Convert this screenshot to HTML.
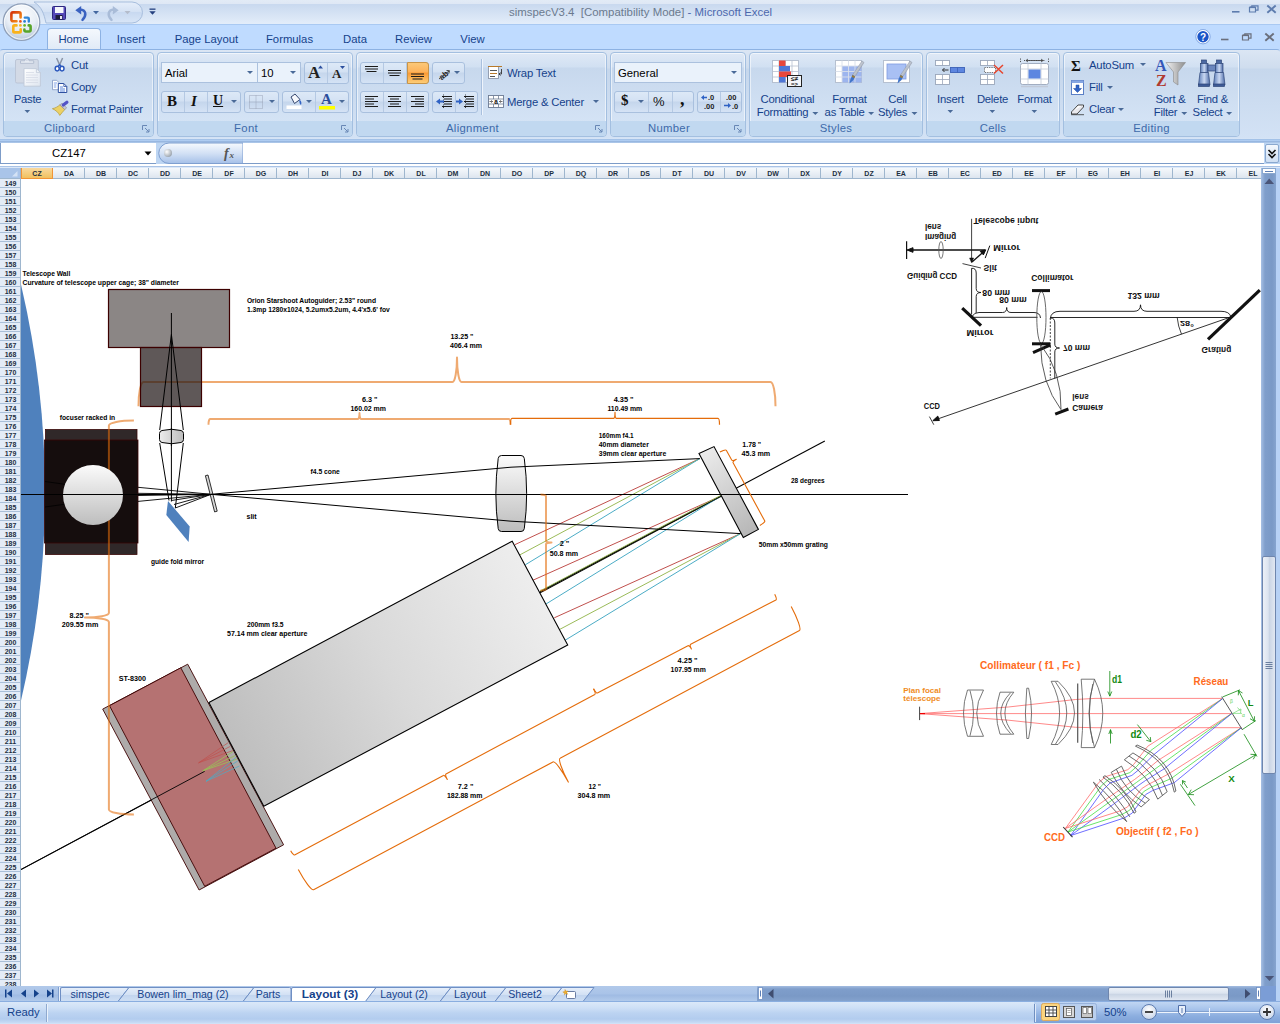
<!DOCTYPE html>
<html lang="en">
<head>
<meta charset="utf-8">
<title>simspecV3.4 [Compatibility Mode] - Microsoft Excel</title>
<style>
*{box-sizing:border-box;margin:0;padding:0}
html,body{width:1280px;height:1024px;overflow:hidden;background:#fff}
body{font-family:"Liberation Sans",sans-serif;font-size:12px;color:#15428b;position:relative}
.abs{position:absolute}
#titlebar{left:0;top:0;width:1280px;height:27px;background:linear-gradient(#e2ebf6 0,#dfe8f5 3.5px,#c9d9ef 4.5px,#d3e1f3 12px,#e3edfa 24px)}
#tabrow{left:0;top:27px;width:1280px;height:23px;background:#bfdbff}
#ribbon{left:0;top:49px;width:1280px;height:92px;background:linear-gradient(#dbe6f4 0,#cfddee 18px,#c6d7ec 19px,#d3e2f5 88px,#e4effb 92px);border-top:1px solid #8db2e3;border-radius:3px 3px 0 0}
#ribbonbot{left:0;top:139px;width:1280px;height:3px;background:linear-gradient(#9ebde3,#bfdbff)}
.t{position:absolute;white-space:nowrap;line-height:1}
.tab{position:absolute;top:32px;font-size:11.3px;color:#15428b;white-space:nowrap;line-height:14px;transform:translateX(-50%)}
.grp{position:absolute;top:52px;height:85px;border:1px solid #a3bfe0;border-radius:4px;background:linear-gradient(#dfe9f6 0,#d1e0f2 14px,#c7d8ed 15px,#d4e3f5 69px,#c1d8f0 70px,#c2d9f1 85px);box-shadow:0 0 0 1px rgba(255,255,255,.55) inset}
.grp .lab{position:absolute;left:0;right:0;bottom:0;height:15px;background:#c1d8f0;border-radius:0 0 3px 3px;text-align:center;font-size:11.3px;letter-spacing:.3px;line-height:14px;padding-right:18px;color:#3e6aaa}
.grp .dl{position:absolute;right:3px;bottom:3px;width:8px;height:8px}
.rt{position:absolute;font-size:11.3px;letter-spacing:-.2px;color:#15428b;white-space:nowrap;line-height:14px}
.rc{position:absolute;font-size:11.3px;letter-spacing:-.25px;color:#15428b;white-space:nowrap;line-height:13px;text-align:center;transform:translateX(-50%)}
.btng{position:absolute;height:22px;border:1px solid #a9c0de;border-radius:3px;background:linear-gradient(#dde9f7 0,#d3e1f3 9px,#c5d6ec 10px,#d6e4f6 21px)}
.sep{position:absolute;top:0;bottom:0;width:1px;background:#b5c9e3}
.combo{position:absolute;height:21px;border:1px solid #abc1de;background:#eaf2fb;font-size:11.3px;color:#000;line-height:21px;padding-left:3px}
.dd{position:absolute;width:0;height:0;border-left:3px solid transparent;border-right:3px solid transparent;border-top:3px solid #4a6a98}
svg{position:absolute;overflow:visible}
.grp .lab.nc{padding-right:0}
.st{position:absolute;top:988px;font-size:10.600px;color:#15428b;white-space:nowrap;line-height:13px;transform:translateX(-50%)}
.ch{position:absolute;top:169.500px;width:32px;text-align:center;font-size:7px;font-weight:bold;color:#1d2f3f;line-height:8px;white-space:nowrap}
.rh{position:absolute;left:0;width:20px;padding-left:1px;height:9px;border-bottom:1px solid #a9bfd8;text-align:center;font-size:7px;font-weight:bold;color:#1d2f3f;line-height:9.600px}
.ddi{display:inline-block;width:0;height:0;border-left:3px solid transparent;border-right:3px solid transparent;border-top:3px solid #4a6a98;vertical-align:middle;margin-left:1px}
</style>
</head>
<body>
<div id="titlebar" class="abs"></div>
<div id="tabrow" class="abs" style="top:24px;height:26px;border-top:1px solid #a9c9f2"></div>
<!-- quick access toolbar pill -->
<svg class="abs" style="left:0;top:0" width="300" height="52" viewBox="0 0 300 52">
 <defs>
  <linearGradient id="qat" x1="0" y1="0" x2="0" y2="1"><stop offset="0" stop-color="#e6eefa"/><stop offset=".45" stop-color="#d5e2f4"/><stop offset=".5" stop-color="#c8d9f0"/><stop offset="1" stop-color="#d9e6f7"/></linearGradient>
  <linearGradient id="lgr" x1="0" y1="0" x2="1" y2="1"><stop offset="0" stop-color="#d4330a"/><stop offset="1" stop-color="#f8981d"/></linearGradient>
  <radialGradient id="orb" cx=".5" cy=".3" r=".75"><stop offset="0" stop-color="#ffffff"/><stop offset=".55" stop-color="#e8eef6"/><stop offset="1" stop-color="#aebfd6"/></radialGradient>
 </defs>
 <path d="M34 2 H132 a10.5 10.5 0 0 1 0 21 H46 C44 14 42 7 34 2 Z" fill="url(#qat)" stroke="#a7bedd" stroke-width="1"/>
 <circle cx="21.5" cy="22.2" r="18.3" fill="url(#orb)" stroke="#8f9fb8" stroke-width="1.2"/>
 <circle cx="21.5" cy="22.2" r="17" fill="none" stroke="#ffffff" stroke-opacity=".8" stroke-width="1"/>
 <!-- office logo -->
 <g fill="none" stroke-width="2.600" stroke-linejoin="round" stroke-linecap="round">
  <path d="M16.500 21.300H13a1.600 1.600 0 0 1-1.600-1.600V14a1.600 1.600 0 0 1 1.600-1.600h6a1.600 1.600 0 0 1 1.600 1.600v3.500" stroke="url(#lgr)"/>
  <path d="M24.800 17.600h2.800a1.200 1.200 0 0 1 1.200 1.200v2.700" stroke="#2f86d8" stroke-width="2.400"/>
  <path d="M16.500 25.400h-2a1.200 1.200 0 0 0-1.200 1.200v4.600a1.200 1.200 0 0 0 1.200 1.200h5a1.200 1.200 0 0 0 1.200-1.200v-2" stroke="#f9b21c"/>
  <path d="M24.400 29.500v.800a1.200 1.200 0 0 0 1.200 1.200h3.800a1.200 1.200 0 0 0 1.200-1.200v-3.700a1.200 1.200 0 0 0-1.200-1.200h-.700" stroke="#58a52a"/>
 </g>
 <circle cx="20.400" cy="21.400" r="1.400" fill="#e8541c"/><circle cx="24.600" cy="21.400" r="1.400" fill="#2f7fd6"/>
 <circle cx="20.400" cy="25.400" r="1.400" fill="#f7b52a"/><circle cx="24.600" cy="25.400" r="1.400" fill="#6ab82c"/>
 <!-- save icon -->
 <g>
  <rect x="52.5" y="6.5" width="13" height="13" rx="1" fill="#5448b8" stroke="#2d2780" stroke-width="1"/>
  <rect x="55" y="7" width="8.5" height="6" fill="#f4f6fb"/>
  <rect x="55.5" y="15" width="7" height="4.5" fill="#1c1c3a"/>
  <rect x="60" y="16" width="2" height="3" fill="#e8e8f0"/>
 </g>
 <!-- undo -->
 <path d="M82.500 19.800c4.500-4.500 3.500-10-2.500-10.300" stroke="#3a62c0" stroke-width="2.500" fill="none" stroke-linecap="round"/>
 <path d="M75.300 10.200l5.900-4.200v8.400z" fill="#3a62c0"/>
 <path d="M93 11 h6 l-3 3.200z" fill="#43679f"/>
 <!-- redo (disabled) -->
 <path d="M111.500 19.800c-4.500-4.500-3.500-10 2.500-10.300" stroke="#a9bcd8" stroke-width="2.500" fill="none" stroke-linecap="round"/>
 <path d="M118.700 10.200l-5.900-4.200v8.400z" fill="#a9bcd8"/>
 <path d="M124.500 11 h6 l-3 3.200z" fill="#b4bccb"/>
 <!-- customize -->
 <rect x="149.500" y="8.500" width="6" height="1.300" fill="#24407f"/>
 <path d="M149.300 11.300 h6.400 l-3.200 3.500z" fill="#24407f"/>
</svg>
<div class="t" style="left:509px;top:7px;font-size:11.400px;color:#6b7a8e;letter-spacing:.02px">simspecV3.4&nbsp; [Compatibility Mode] <span style="color:#4d68ad">- Microsoft Excel</span></div>
<!-- window controls -->
<svg class="abs" style="left:1180px;top:0" width="100" height="52" viewBox="1180 0 100 52">
 <g fill="none" stroke="#5d7cae" stroke-width="1.600">
  <path d="M1232 11.800h7.500"/>
  <path d="M1249.500 7.500h6v4.500h-6z M1251.800 7.500v-1.700h6.200v4.300h-2.300" stroke-width="1.200"/><path d="M1249.500 7.200h6" stroke-width="1.800"/>
  <path d="M1267.300 5.500l8.400 7.300M1275.700 5.500l-8.400 7.300" stroke-width="1.900"/>
 </g>
 <circle cx="1203" cy="36.700" r="6.300" fill="#1a55c8" stroke="#ffffff" stroke-width="1.200"/>
 <circle cx="1203" cy="36.700" r="7.200" fill="none" stroke="#6c94d8" stroke-width=".7"/>
 <text x="1203" y="40.500" font-family="Liberation Sans,sans-serif" font-weight="bold" font-size="10" fill="#fff" text-anchor="middle">?</text>
 <g fill="none" stroke="#6a6f7c" stroke-width="1.600">
  <path d="M1221 39.500h7.500"/>
  <path d="M1242.500 35.500h6v4.500h-6z M1244.800 35.500v-1.700h6.200v4.300h-2.300" stroke-width="1.200"/><path d="M1242.500 35.200h6" stroke-width="1.800"/>
  <path d="M1265.300 33.500l8.400 7.300M1273.700 33.500l-8.400 7.300" stroke-width="1.900"/>
 </g>
</svg>
<!-- tabs -->
<div class="abs" style="left:47px;top:28px;width:54px;height:23px;border:1px solid #8db2e3;border-bottom:none;border-radius:4px 4px 0 0;background:linear-gradient(#f4f8fd,#dfe9f6)"></div>
<div class="tab" style="left:73.500px">Home</div>
<div class="tab" style="left:131px">Insert</div>
<div class="tab" style="left:206.500px">Page Layout</div>
<div class="tab" style="left:289.500px">Formulas</div>
<div class="tab" style="left:355px">Data</div>
<div class="tab" style="left:413.500px">Review</div>
<div class="tab" style="left:472.500px">View</div>
<div id="ribbon" class="abs"></div>
<div id="ribbonbot" class="abs"></div>
<!-- ===== Clipboard ===== -->
<div class="grp" style="left:3px;width:151px"><div class="lab">Clipboard</div>
<svg class="dl" viewBox="0 0 8 8"><path d="M.5 5V.5H5" fill="none" stroke="#6887b5"/><path d="M3 3l4 4M7 4v3H4" fill="none" stroke="#6887b5"/></svg></div>
<svg class="abs" style="left:0;top:50px" width="160" height="90" viewBox="0 50 160 90">
 <defs><linearGradient id="pg" x1="0" y1="0" x2="1" y2="1"><stop offset="0" stop-color="#ffffff"/><stop offset="1" stop-color="#dfe6f0"/></linearGradient></defs>
 <!-- paste icon -->
 <rect x="15.500" y="59.500" width="22.800" height="23.500" rx="1.500" fill="#d3dae6" stroke="#bcc6d7"/>
 <path d="M20.500 63.300v-2.500h4.200a2.200 2.200 0 0 1 4.400 0H33.700v2.500z" fill="#e6ebf3" stroke="#a9b5c9" stroke-width=".8"/>
 <circle cx="26.900" cy="60.300" r=".8" fill="#c9d1df"/>
 <path d="M24 68.600h12.400l4 4v13.600H24z" fill="url(#pg)" stroke="#c0c9d9" stroke-width=".9"/>
 <path d="M36.400 68.600v4h4" fill="none" stroke="#c0c9d9" stroke-width=".8"/>
 <path d="M26 72.500h8M26 75h12M26 77.500h12M26 80h12M26 82.500h12" stroke="#d5dbe6" stroke-width=".8"/>
 <path d="M24.500 110h5.600l-2.800 3z" fill="#4a6a98"/>
 <!-- cut -->
 <path d="M56.600 58l3.300 7.500M62.600 58l-3.300 7.500" stroke="#8a94a6" stroke-width="1.500" fill="none"/>
 <path d="M59.600 64.500l-1.500 2M59.600 64.500l1.500 2" stroke="#2f5fc4" stroke-width="1.300"/>
 <ellipse cx="57.200" cy="68.600" rx="2" ry="2.300" fill="#fff" stroke="#2c58bd" stroke-width="1.500"/><ellipse cx="62" cy="68.600" rx="2" ry="2.300" fill="#fff" stroke="#2c58bd" stroke-width="1.500"/>
 <!-- copy -->
 <path d="M52.500 80.300h4.200l2 2v7.400h-6.200z" fill="#fff" stroke="#7f96c4" stroke-width=".8"/>
 <path d="M53.800 83h3.500M53.800 85h2.500M53.800 87h2.500" stroke="#5f8ae0" stroke-width=".8"/>
 <path d="M58.300 83.500h5.500l3 3v6h-8.500z" fill="#fff" stroke="#2c4fa0" stroke-width="1"/>
 <path d="M63.800 83.500v3h3" fill="none" stroke="#2c4fa0" stroke-width=".8"/>
 <path d="M60 87h3M60 89h5M60 91h5" stroke="#4a7bd8" stroke-width=".9"/>
 <!-- format painter -->
 <path d="M52.400 108.700c2.500-.500 5.500-2 7.400-3.800l5 4.600c-1.800 2-3.600 4.200-5 5.900c-1.500-3-4-5.200-7.400-6.700z" fill="#ecd166" stroke="#b39a36" stroke-width=".7"/>
 <path d="M59.800 104.900l2.200-1.600 4.600 4.500-1.800 1.700z" fill="#c9c9d2" stroke="#7f7f90" stroke-width=".6"/>
 <path d="M63.300 105l3.600-2.800" stroke="#5353c6" stroke-width="3.200" stroke-linecap="round"/>
</svg>
<div class="rc" style="left:27.500px;top:93px">Paste</div>
<div class="rt" style="left:71px;top:58px">Cut</div>
<div class="rt" style="left:71px;top:80px">Copy</div>
<div class="rt" style="left:71px;top:102px">Format Painter</div>
<!-- ===== Font ===== -->
<div class="grp" style="left:157px;width:196px"><div class="lab">Font</div>
<svg class="dl" viewBox="0 0 8 8"><path d="M.5 5V.5H5" fill="none" stroke="#6887b5"/><path d="M3 3l4 4M7 4v3H4" fill="none" stroke="#6887b5"/></svg></div>
<div class="combo" style="left:161px;top:62px;width:97px">Arial</div><div class="dd" style="left:247px;top:71px"></div>
<div class="combo" style="left:257px;top:62px;width:44px">10</div><div class="dd" style="left:290px;top:71px"></div>
<div class="btng" style="left:304px;top:62px;width:45px"><div class="sep" style="left:22px"></div></div>
<div class="t" style="left:308px;top:64px;font-family:'Liberation Serif',serif;font-weight:bold;font-size:17px;color:#222">A</div>
<div class="t" style="left:332px;top:67px;font-family:'Liberation Serif',serif;font-weight:bold;font-size:13px;color:#222">A</div>
<svg class="abs" style="left:318px;top:64px" width="30" height="8" viewBox="0 0 30 8"><path d="M0 4.500h5l-2.500-3z" fill="#2c4f9e"/><path d="M22 2h5l-2.500 3z" fill="#2c4f9e"/></svg>
<div class="btng" style="left:161px;top:91px;width:80px"><div class="sep" style="left:22px"></div><div class="sep" style="left:45px"></div></div>
<div class="t" style="left:167px;top:94px;font-family:'Liberation Serif',serif;font-weight:bold;font-size:15px;color:#111">B</div>
<div class="t" style="left:191px;top:94px;font-family:'Liberation Serif',serif;font-style:italic;font-weight:bold;font-size:15px;color:#111">I</div>
<div class="t" style="left:213px;top:94px;font-family:'Liberation Serif',serif;font-weight:bold;font-size:14px;color:#111;text-decoration:underline">U</div>
<div class="dd" style="left:231px;top:100px"></div>
<div class="btng" style="left:244px;top:91px;width:35px"></div>
<svg class="abs" style="left:249px;top:95px" width="14" height="14" viewBox="0 0 14 14"><path d="M.5.5h13v13H.5zM7 .5v13M.5 7h13" fill="none" stroke="#9aa5b8" stroke-width="1" stroke-dasharray="1 1"/></svg>
<div class="dd" style="left:269px;top:100px"></div>
<div class="btng" style="left:282px;top:91px;width:67px"><div class="sep" style="left:32px"></div></div>
<svg class="abs" style="left:285px;top:93px" width="62" height="19" viewBox="285 93 62 19">
 <path d="M291 97l4-3 5 5.500-5.500 4z" fill="#f6f8fc" stroke="#34466e" stroke-width="1"/><path d="M299.500 99.500c1.800 1.500 2.300 3.500 1.500 5.500-1-.5-2-2.500-1.500-5.500z" fill="#2f62c4"/>
 <rect x="286.500" y="105.500" width="15" height="3.500" fill="#ffffff"/>
 <rect x="319" y="106" width="16" height="3.500" fill="#ffff00"/>
</svg>
<div class="t" style="left:321px;top:92px;font-family:'Liberation Serif',serif;font-weight:bold;font-size:15px;color:#2a4d9b">A</div>
<div class="dd" style="left:306px;top:100px"></div><div class="dd" style="left:339px;top:100px"></div>
<!-- ===== Alignment ===== -->
<div class="grp" style="left:356px;width:251px"><div class="lab">Alignment</div>
<svg class="dl" viewBox="0 0 8 8"><path d="M.5 5V.5H5" fill="none" stroke="#6887b5"/><path d="M3 3l4 4M7 4v3H4" fill="none" stroke="#6887b5"/></svg></div>
<div class="btng" style="left:360px;top:62px;width:69px"><div class="sep" style="left:22px"></div><div class="sep" style="left:45px"></div>
 <div class="abs" style="left:46px;top:-1px;width:22px;height:22px;background:linear-gradient(#fbc878 0,#fdb25a 9px,#fb9a33 10px,#fdd27e 21px);border:1px solid #c89448;border-radius:0 3px 3px 0"></div></div>
<div class="btng" style="left:432px;top:62px;width:33px"></div>
<div class="btng" style="left:360px;top:91px;width:69px"><div class="sep" style="left:22px"></div><div class="sep" style="left:45px"></div></div>
<div class="btng" style="left:432px;top:91px;width:46px"><div class="sep" style="left:22px"></div></div>
<svg class="abs" style="left:356px;top:58px" width="130" height="60" viewBox="356 58 130 60">
 <g stroke="#1a1a1a" stroke-width="1.100" fill="none">
  <path d="M365 66.500h13M365 69h13M366.500 71.500h10"/>
  <path d="M388 70.500h13M388 73h13M389.500 75.500h10"/>
  <path d="M411 74h13M411 76.500h13M412.500 79h10"/>
  <path d="M365 96.500h13M365 99h9M365 101.500h13M365 104h9M365 106.500h13"/>
  <path d="M388 96.500h13M390 99h9M388 101.500h13M390 104h9M388 106.500h13"/>
  <path d="M411 96.500h13M415 99h9M411 101.500h13M415 104h9M411 106.500h13"/>
  <path d="M442 96.500h10M444 99h8M442 101.500h10M444 104h8M442 106.500h10"/>
  <path d="M464 96.500h10M466 99h8M464 101.500h10M466 104h8M464 106.500h10"/>
  <path d="M443.500 94.500v14M465.500 94.500v14" stroke-dasharray="1 1.500" stroke-width=".8"/>
 </g>
 <path d="M436 101.500l4-3v2h4v2h-4v2z" fill="#2f62c4"/><path d="M459 98.500l4 3-4 3v-2h-3v-2h3z" fill="#2f62c4"/>
 <!-- orientation -->
 <g transform="rotate(-40 446 73)" fill="none" stroke="#222" stroke-width="1"><text x="438" y="76" font-family="Liberation Sans,sans-serif" font-size="8" fill="#222" stroke="none" font-weight="bold">ab</text></g>
 <path d="M439 79l10-8M446.500 70.500l3 .200-.800 3" fill="none" stroke="#444" stroke-width="1"/>
 <path d="M481.500 59v56" stroke="#a9c0de"/><path d="M482.500 59v56" stroke="#eef4fc"/>
</svg>
<div class="dd" style="left:454px;top:71px"></div>
<svg class="abs" style="left:486px;top:62px" width="20" height="50" viewBox="486 62 20 50">
 <rect x="488.500" y="66.500" width="10" height="12" fill="#fff" stroke="#8c97ab" stroke-width=".9"/>
 <path d="M488 66.500h14M490 70.500h7M490 73.500h7M490 76.500h5" stroke="#b97a2a" stroke-width="1.100"/><path d="M490 70.500h7M490 76.500h5" stroke="#555" stroke-width="1"/>
 <path d="M501.500 69v5h-2.500m1.500-1.500l-1.500 1.500 1.500 1.500" fill="none" stroke="#333" stroke-width=".9"/>
 <rect x="488.500" y="95.500" width="15" height="12" fill="#fff" stroke="#6d7b93" stroke-width=".9"/>
 <path d="M488.500 99h15M488.500 104h15M493.500 95.500v3.500M498.500 95.500v3.500M493.500 104v3.500M498.500 104v3.500" stroke="#6d7b93" stroke-width=".8"/>
 <text x="496" y="103.600" font-family="Liberation Sans,sans-serif" font-size="6.500" font-weight="bold" fill="#111" text-anchor="middle">a</text>
 <path d="M489.500 101.500h3m-1.200-1.200l1.200 1.200-1.200 1.200M502.500 101.500h-3m1.200-1.200l-1.200 1.200 1.200 1.200" fill="none" stroke="#333" stroke-width=".7"/>
</svg>
<div class="rt" style="left:507px;top:66px">Wrap Text</div>
<div class="rt" style="left:507px;top:95px">Merge &amp; Center</div>
<div class="dd" style="left:593px;top:100px"></div>
<!-- ===== Number ===== -->
<div class="grp" style="left:610px;width:136px"><div class="lab">Number</div>
<svg class="dl" viewBox="0 0 8 8"><path d="M.5 5V.5H5" fill="none" stroke="#6887b5"/><path d="M3 3l4 4M7 4v3H4" fill="none" stroke="#6887b5"/></svg></div>
<div class="combo" style="left:614px;top:62px;width:128px">General</div><div class="dd" style="left:731px;top:71px"></div>
<div class="btng" style="left:614px;top:91px;width:80px"><div class="sep" style="left:33px"></div><div class="sep" style="left:57px"></div></div>
<div class="t" style="left:621px;top:93px;font-family:'Liberation Serif',serif;font-weight:bold;font-size:15px;color:#111">$</div>
<div class="dd" style="left:638px;top:100px"></div>
<div class="t" style="left:653px;top:95px;font-size:13px;color:#111">%</div>
<div class="t" style="left:680px;top:90px;font-family:'Liberation Serif',serif;font-weight:bold;font-size:18px;color:#111">,</div>
<div class="btng" style="left:697px;top:91px;width:45px"><div class="sep" style="left:22px"></div></div>
<svg class="abs" style="left:697px;top:91px" width="45" height="22" viewBox="697 91 45 22">
 <g font-family="Liberation Sans,sans-serif" font-size="7.500" font-weight="bold" fill="#222">
  <text x="708" y="100">.0</text><text x="704" y="108.500">.00</text>
  <text x="726" y="100">.00</text><text x="732" y="108.500">.0</text></g>
 <path d="M701 97.500l3-2.500v1.700h3v1.600h-3v1.700z" fill="#2f62c4"/>
 <path d="M731 105.500l-3-2.500v1.700h-4v1.600h4v1.700z" fill="#2f62c4"/>
</svg>
<!-- ===== Styles ===== -->
<div class="grp" style="left:749px;width:174px"><div class="lab nc">Styles</div></div>
<svg class="abs" style="left:749px;top:52px" width="174" height="70" viewBox="749 52 174 70">
 <defs><linearGradient id="brush" x1="0" y1="0" x2="1" y2="1"><stop offset="0" stop-color="#e8ecf2"/><stop offset="1" stop-color="#9099a8"/></linearGradient></defs>
 <!-- conditional formatting -->
 <rect x="772.500" y="60.500" width="26" height="22" fill="#fff" stroke="#b6c0d0"/>
 <path d="M772.500 66h26M772.500 71.500h26M772.500 77h26M779 60.500v22M785.500 60.500v22M792 60.500v22" stroke="#b6c0d0" stroke-width=".8"/>
 <rect x="779" y="60.500" width="6.500" height="5.500" fill="#e8473c"/><rect x="779" y="66" width="11" height="5.500" fill="#4f77d6"/>
 <rect x="779" y="71.500" width="12" height="5.500" fill="#e8473c"/><rect x="779" y="77" width="6.500" height="5.500" fill="#4f77d6"/>
 <rect x="787.500" y="75.500" width="14" height="11" fill="#f4f6fa" stroke="#222" stroke-width="1"/>
 <text x="794.500" y="81" font-family="Liberation Sans,sans-serif" font-size="6.500" font-weight="bold" fill="#111" text-anchor="middle">≤≠</text>
 <text x="794.500" y="86" font-family="Liberation Sans,sans-serif" font-size="6" font-weight="bold" fill="#111" text-anchor="middle">=&gt;</text>
 <!-- format as table -->
 <rect x="835.500" y="60.500" width="26" height="22" fill="#fff" stroke="#b6c0d0"/>
 <rect x="842" y="66" width="19.500" height="16.500" fill="#9db5ee"/>
 <path d="M835.500 66h26M835.500 71.500h26M835.500 77h26M842 60.500v22M848.500 60.500v22M855 60.500v22" stroke="#d8dfea" stroke-width=".9"/>
 <path d="M862 61l2 1.500-9 14-2.500-1.500z" fill="url(#brush)" stroke="#8a93a3" stroke-width=".5"/><path d="M852.500 75l2.500 1.500-1.500 3.500-4 3.500 1-4.500z" fill="#3f73c8"/><path d="M852.500 75l2.500 1.500-.700 1.700-2.600-1.500z" fill="#9a7b3a"/>
 <!-- cell styles -->
 <rect x="883.500" y="60.500" width="26" height="22" fill="#fff" stroke="#b6c0d0"/>
 <rect x="887" y="64" width="19" height="15" fill="#a9c0f4" stroke="#7f9be0" stroke-width=".8"/>
 <path d="M910 61l2 1.500-9 14-2.500-1.500z" fill="url(#brush)" stroke="#8a93a3" stroke-width=".5"/><path d="M900.500 75l2.500 1.500-1.500 3.500-4 3.500 1-4.500z" fill="#3f73c8"/><path d="M900.500 75l2.500 1.500-.700 1.700-2.600-1.500z" fill="#9a7b3a"/>
</svg>
<div class="rc" style="left:787.500px;top:93px">Conditional<br>Formatting <span class="ddi"></span></div>
<div class="rc" style="left:849.500px;top:93px">Format<br>as Table <span class="ddi"></span></div>
<div class="rc" style="left:897.500px;top:93px">Cell<br>Styles <span class="ddi"></span></div>
<!-- ===== Cells ===== -->
<div class="grp" style="left:926px;width:134px"><div class="lab nc">Cells</div></div>
<svg class="abs" style="left:926px;top:52px" width="134" height="70" viewBox="926 52 134 70">
 <!-- insert -->
 <g fill="#fff" stroke="#9aa6ba" stroke-width=".9"><rect x="935.500" y="60.500" width="14" height="5"/><rect x="935.500" y="74.500" width="14" height="10"/></g>
 <path d="M935.500 79.500h14M942.500 60.500v5M942.500 74.500v10" stroke="#9aa6ba" stroke-width=".8"/>
 <rect x="950.500" y="67.500" width="14" height="5" fill="#5d86e0" stroke="#3c62b8" stroke-width=".9"/><path d="M957.500 67.500v5" stroke="#3c62b8" stroke-width=".8"/>
 <path d="M948.500 70h-6m2-2l-2 2 2 2" fill="none" stroke="#333" stroke-width="1"/>
 <!-- delete -->
 <g fill="#fff" stroke="#9aa6ba" stroke-width=".9"><rect x="980.500" y="60.500" width="14" height="5"/><rect x="980.500" y="74.500" width="14" height="10"/></g>
 <path d="M980.500 79.500h14M987.500 60.500v5M987.500 74.500v10" stroke="#9aa6ba" stroke-width=".8"/>
 <rect x="984.500" y="67.500" width="11" height="5" fill="#fff" stroke="#555" stroke-width=".8" stroke-dasharray="1.300 1"/>
 <path d="M994 65l9 8.500M1003 65l-9 8.500" stroke="#e8452c" stroke-width="1.500"/>
 <!-- format -->
 <rect x="1020.500" y="63.500" width="28" height="21" rx="2" fill="#fff" stroke="#9aa6ba" stroke-width=".9"/>
 <path d="M1020.500 69h28M1020.500 79h28M1028 63.500v21M1041 63.500v21" stroke="#c2cad8" stroke-width=".8"/>
 <rect x="1028.500" y="69.500" width="12" height="9" fill="#5d86e0"/>
 <path d="M1021 86.500h27" stroke="#c2cad8" stroke-width="1.500"/>
 <path d="M1020.500 58.500v4M1048.500 58.500v4M1024 60.500h21" stroke="#444" stroke-width=".9" stroke-dasharray="1.200 1.200"/><path d="M1026 60.500h17m-2-1.500l2 1.500-2 1.500m-13-3l-2 1.500 2 1.500" fill="none" stroke="#444" stroke-width=".8"/>
 <path d="M947.500 110h5.600l-2.800 3zM989.500 110h5.600l-2.800 3zM1031.500 110h5.600l-2.800 3z" fill="#4a6a98"/>
</svg>
<div class="rc" style="left:950.500px;top:93px">Insert</div>
<div class="rc" style="left:992.500px;top:93px">Delete</div>
<div class="rc" style="left:1034.500px;top:93px">Format</div>
<!-- ===== Editing ===== -->
<div class="grp" style="left:1063px;width:177px"><div class="lab nc">Editing</div></div>
<svg class="abs" style="left:1063px;top:52px" width="177" height="70" viewBox="1063 52 177 70">
 <defs><linearGradient id="bino" x1="0" y1="0" x2="1" y2="0"><stop offset="0" stop-color="#5c7db8"/><stop offset=".5" stop-color="#c9d8f2"/><stop offset="1" stop-color="#4c6aa6"/></linearGradient>
 <linearGradient id="funnel" x1="0" y1="0" x2="1" y2="0"><stop offset="0" stop-color="#f2f2f2"/><stop offset="1" stop-color="#8d8d8d"/></linearGradient></defs>
 <text x="1071" y="70.500" font-family="Liberation Serif,serif" font-size="15" font-weight="bold" fill="#111">Σ</text>
 <!-- fill -->
 <rect x="1071.500" y="80.500" width="12" height="14" fill="#fff" stroke="#5a7fc6" stroke-width="1"/><rect x="1071.500" y="80.500" width="12" height="2.500" fill="#86a6e2"/>
 <path d="M1076 85h3v3.500h2.500l-4 4-4-4h2.500z" fill="#2f62c4" stroke="#1d49a0" stroke-width=".5"/>
 <!-- clear (eraser) -->
 <path d="M1071.500 112l6.500-7h5.500l-6.500 7z" fill="#fdfdfd" stroke="#333" stroke-width=".9"/><path d="M1071.500 112v2h5.500l6.500-7v-2" fill="#e9e9ee" stroke="#333" stroke-width=".9"/>
 <path d="M1071 114.700h13" stroke="#333" stroke-width=".8"/>
 <!-- sort & filter -->
 <text x="1155" y="71" font-family="Liberation Serif,serif" font-size="16" font-weight="bold" fill="#3557b8">A</text>
 <text x="1156" y="86" font-family="Liberation Serif,serif" font-size="16" font-weight="bold" fill="#b03a30">Z</text>
 <path d="M1166 62.500h19.500l-7.500 9.500v13l-4.500-3v-10z" fill="url(#funnel)" stroke="#8a8a8a" stroke-width=".6"/>
 <!-- binoculars -->
 <g stroke="#2e4678" stroke-width=".7">
  <rect x="1201.500" y="60" width="5" height="4" fill="#4b68a2"/><rect x="1216.500" y="60" width="5" height="4" fill="#4b68a2"/>
  <rect x="1200.500" y="63.500" width="7.500" height="9" fill="url(#bino)"/><rect x="1215.500" y="63.500" width="7.500" height="9" fill="url(#bino)"/>
  <rect x="1208" y="65" width="7.500" height="6" fill="#6a86bd"/>
  <path d="M1200 72.500h8.500l1.500 12.500h-11.500z" fill="url(#bino)"/><path d="M1215 72.500h8.500l1.500 12.500h-11.500z" fill="url(#bino)"/>
  <rect x="1198.500" y="84" width="11" height="2.500" fill="#3d5a96"/><rect x="1213.500" y="84" width="11" height="2.500" fill="#3d5a96"/>
 </g>
</svg>
<div class="rt" style="left:1089px;top:58px">AutoSum</div><div class="dd" style="left:1140px;top:63px"></div>
<div class="rt" style="left:1089px;top:80px">Fill</div><div class="dd" style="left:1107px;top:86px"></div>
<div class="rt" style="left:1089px;top:102px">Clear</div><div class="dd" style="left:1118px;top:108px"></div>
<div class="rc" style="left:1170.500px;top:93px">Sort &amp;<br>Filter <span class="ddi"></span></div>
<div class="rc" style="left:1212.500px;top:93px">Find &amp;<br>Select <span class="ddi"></span></div>
<!-- ===== formula bar ===== -->
<div class="abs" style="left:0;top:141px;width:1280px;height:27px;background:#bed6f3"></div>
<div class="abs" style="left:0;top:164px;width:1280px;height:2px;background:#fff"></div>
<div class="abs" style="left:0;top:166px;width:1280px;height:2px;background:linear-gradient(#a9c3e6 0,#a9c3e6 .8px,#dce8f8 1px)"></div>
<div class="abs" style="left:0;top:141px;width:1280px;height:2px;background:linear-gradient(#8fb0dc,#b4cdec)"></div>
<div class="abs" style="left:0;top:143px;width:156px;height:21px;background:#fff;border-bottom:1px solid #7d9cc8;border-left:1px solid #7d9cc8"></div>
<div class="t" style="left:52px;top:148px;font-size:11.3px;color:#000">CZ147</div>
<svg class="abs" style="left:140px;top:143px" width="120" height="21" viewBox="140 143 120 21"><defs><linearGradient id="fxg" x1="0" y1="0" x2="0" y2="1"><stop offset="0" stop-color="#f7fafe"/><stop offset=".5" stop-color="#d3e1f5"/><stop offset="1" stop-color="#a5c0e8"/></linearGradient><radialGradient id="knob" cx=".35" cy=".35" r=".7"><stop offset="0" stop-color="#ffffff"/><stop offset="1" stop-color="#9aa3ad"/></radialGradient></defs><path d="M144.500 151.500h7l-3.500 4z" fill="#000"/><path d="M243 143H169a10 10 0 0 0 0 20.500H243z" fill="url(#fxg)" stroke="#7f9fd0" stroke-width="1"/><circle cx="168" cy="153" r="4" fill="url(#knob)"/><text x="224" y="158" font-family="Liberation Serif,serif" font-style="italic" font-weight="bold" font-size="14" fill="#555">f</text><text x="229.500" y="158" font-family="Liberation Serif,serif" font-style="italic" font-weight="bold" font-size="9" fill="#555">x</text></svg>
<div class="abs" style="left:243px;top:143px;width:1021px;height:21px;background:#fff;border-bottom:1px solid #7d9cc8"></div>
<div class="abs" style="left:1265px;top:144px;width:14px;height:19px;background:linear-gradient(#f4f8fd,#cfdff3);border:1px solid #8aa8cf;border-radius:2px"></div>
<svg class="abs" style="left:1265px;top:144px" width="14" height="19" viewBox="0 0 14 19"><path d="M3.500 6l3.500 3.500 3.500-3.500M3.500 10l3.500 3.500 3.500-3.500" fill="none" stroke="#111" stroke-width="1.600"/></svg>
<!-- ===== column headers ===== -->
<div class="abs" style="left:0;top:168px;width:1262px;height:11px;background:linear-gradient(#f6f9fc,#dde5ef);border-bottom:1px solid #9eb6ce"></div>
<div class="abs" style="left:0;top:168px;width:21px;height:11px;background:#a9c4e9;border-right:1px solid #9eb6ce;border-bottom:1px solid #9eb6ce"></div>
<svg class="abs" style="left:12px;top:171px" width="6" height="6" viewBox="0 0 6 6"><path d="M5.500 0v5.500H0z" fill="#d4e2f5"/></svg>
<div class="abs" style="left:21px;top:168px;width:32px;height:11px;background:linear-gradient(#f9d99f,#f1c15f);border:1px solid #f29536;border-top:none"></div>
<div class="ch" style="left:21px">CZ</div>
<div class="abs" style="left:84px;top:168px;width:1px;height:10px;background:#9eb6ce"></div>
<div class="ch" style="left:53px">DA</div>
<div class="abs" style="left:116px;top:168px;width:1px;height:10px;background:#9eb6ce"></div>
<div class="ch" style="left:85px">DB</div>
<div class="abs" style="left:148px;top:168px;width:1px;height:10px;background:#9eb6ce"></div>
<div class="ch" style="left:117px">DC</div>
<div class="abs" style="left:180px;top:168px;width:1px;height:10px;background:#9eb6ce"></div>
<div class="ch" style="left:149px">DD</div>
<div class="abs" style="left:212px;top:168px;width:1px;height:10px;background:#9eb6ce"></div>
<div class="ch" style="left:181px">DE</div>
<div class="abs" style="left:244px;top:168px;width:1px;height:10px;background:#9eb6ce"></div>
<div class="ch" style="left:213px">DF</div>
<div class="abs" style="left:276px;top:168px;width:1px;height:10px;background:#9eb6ce"></div>
<div class="ch" style="left:245px">DG</div>
<div class="abs" style="left:308px;top:168px;width:1px;height:10px;background:#9eb6ce"></div>
<div class="ch" style="left:277px">DH</div>
<div class="abs" style="left:340px;top:168px;width:1px;height:10px;background:#9eb6ce"></div>
<div class="ch" style="left:309px">DI</div>
<div class="abs" style="left:372px;top:168px;width:1px;height:10px;background:#9eb6ce"></div>
<div class="ch" style="left:341px">DJ</div>
<div class="abs" style="left:404px;top:168px;width:1px;height:10px;background:#9eb6ce"></div>
<div class="ch" style="left:373px">DK</div>
<div class="abs" style="left:436px;top:168px;width:1px;height:10px;background:#9eb6ce"></div>
<div class="ch" style="left:405px">DL</div>
<div class="abs" style="left:468px;top:168px;width:1px;height:10px;background:#9eb6ce"></div>
<div class="ch" style="left:437px">DM</div>
<div class="abs" style="left:500px;top:168px;width:1px;height:10px;background:#9eb6ce"></div>
<div class="ch" style="left:469px">DN</div>
<div class="abs" style="left:532px;top:168px;width:1px;height:10px;background:#9eb6ce"></div>
<div class="ch" style="left:501px">DO</div>
<div class="abs" style="left:564px;top:168px;width:1px;height:10px;background:#9eb6ce"></div>
<div class="ch" style="left:533px">DP</div>
<div class="abs" style="left:596px;top:168px;width:1px;height:10px;background:#9eb6ce"></div>
<div class="ch" style="left:565px">DQ</div>
<div class="abs" style="left:628px;top:168px;width:1px;height:10px;background:#9eb6ce"></div>
<div class="ch" style="left:597px">DR</div>
<div class="abs" style="left:660px;top:168px;width:1px;height:10px;background:#9eb6ce"></div>
<div class="ch" style="left:629px">DS</div>
<div class="abs" style="left:692px;top:168px;width:1px;height:10px;background:#9eb6ce"></div>
<div class="ch" style="left:661px">DT</div>
<div class="abs" style="left:724px;top:168px;width:1px;height:10px;background:#9eb6ce"></div>
<div class="ch" style="left:693px">DU</div>
<div class="abs" style="left:756px;top:168px;width:1px;height:10px;background:#9eb6ce"></div>
<div class="ch" style="left:725px">DV</div>
<div class="abs" style="left:788px;top:168px;width:1px;height:10px;background:#9eb6ce"></div>
<div class="ch" style="left:757px">DW</div>
<div class="abs" style="left:820px;top:168px;width:1px;height:10px;background:#9eb6ce"></div>
<div class="ch" style="left:789px">DX</div>
<div class="abs" style="left:852px;top:168px;width:1px;height:10px;background:#9eb6ce"></div>
<div class="ch" style="left:821px">DY</div>
<div class="abs" style="left:884px;top:168px;width:1px;height:10px;background:#9eb6ce"></div>
<div class="ch" style="left:853px">DZ</div>
<div class="abs" style="left:916px;top:168px;width:1px;height:10px;background:#9eb6ce"></div>
<div class="ch" style="left:885px">EA</div>
<div class="abs" style="left:948px;top:168px;width:1px;height:10px;background:#9eb6ce"></div>
<div class="ch" style="left:917px">EB</div>
<div class="abs" style="left:980px;top:168px;width:1px;height:10px;background:#9eb6ce"></div>
<div class="ch" style="left:949px">EC</div>
<div class="abs" style="left:1012px;top:168px;width:1px;height:10px;background:#9eb6ce"></div>
<div class="ch" style="left:981px">ED</div>
<div class="abs" style="left:1044px;top:168px;width:1px;height:10px;background:#9eb6ce"></div>
<div class="ch" style="left:1013px">EE</div>
<div class="abs" style="left:1076px;top:168px;width:1px;height:10px;background:#9eb6ce"></div>
<div class="ch" style="left:1045px">EF</div>
<div class="abs" style="left:1108px;top:168px;width:1px;height:10px;background:#9eb6ce"></div>
<div class="ch" style="left:1077px">EG</div>
<div class="abs" style="left:1140px;top:168px;width:1px;height:10px;background:#9eb6ce"></div>
<div class="ch" style="left:1109px">EH</div>
<div class="abs" style="left:1172px;top:168px;width:1px;height:10px;background:#9eb6ce"></div>
<div class="ch" style="left:1141px">EI</div>
<div class="abs" style="left:1204px;top:168px;width:1px;height:10px;background:#9eb6ce"></div>
<div class="ch" style="left:1173px">EJ</div>
<div class="abs" style="left:1236px;top:168px;width:1px;height:10px;background:#9eb6ce"></div>
<div class="ch" style="left:1205px">EK</div>
<div class="abs" style="left:1268px;top:168px;width:1px;height:10px;background:#9eb6ce"></div>
<div class="ch" style="left:1237px">EL</div>
<!-- ===== row headers ===== -->
<div class="abs" style="left:0;top:178.500px;width:21px;height:807.500px;background:#e4ecf7;border-right:1px solid #9eb6ce;overflow:hidden">
<div class="rh" style="top:0.5px">149</div>
<div class="rh" style="top:9.5px">150</div>
<div class="rh" style="top:18.5px">151</div>
<div class="rh" style="top:27.5px">152</div>
<div class="rh" style="top:36.5px">153</div>
<div class="rh" style="top:45.5px">154</div>
<div class="rh" style="top:54.5px">155</div>
<div class="rh" style="top:63.5px">156</div>
<div class="rh" style="top:72.5px">157</div>
<div class="rh" style="top:81.5px">158</div>
<div class="rh" style="top:90.5px">159</div>
<div class="rh" style="top:99.5px">160</div>
<div class="rh" style="top:108.5px">161</div>
<div class="rh" style="top:117.5px">162</div>
<div class="rh" style="top:126.5px">163</div>
<div class="rh" style="top:135.5px">164</div>
<div class="rh" style="top:144.5px">165</div>
<div class="rh" style="top:153.5px">166</div>
<div class="rh" style="top:162.5px">167</div>
<div class="rh" style="top:171.5px">168</div>
<div class="rh" style="top:180.5px">169</div>
<div class="rh" style="top:189.5px">170</div>
<div class="rh" style="top:198.5px">171</div>
<div class="rh" style="top:207.5px">172</div>
<div class="rh" style="top:216.5px">173</div>
<div class="rh" style="top:225.5px">174</div>
<div class="rh" style="top:234.5px">175</div>
<div class="rh" style="top:243.5px">176</div>
<div class="rh" style="top:252.5px">177</div>
<div class="rh" style="top:261.5px">178</div>
<div class="rh" style="top:270.5px">179</div>
<div class="rh" style="top:279.5px">180</div>
<div class="rh" style="top:288.5px">181</div>
<div class="rh" style="top:297.5px">182</div>
<div class="rh" style="top:306.5px">183</div>
<div class="rh" style="top:315.5px">184</div>
<div class="rh" style="top:324.5px">185</div>
<div class="rh" style="top:333.5px">186</div>
<div class="rh" style="top:342.5px">187</div>
<div class="rh" style="top:351.5px">188</div>
<div class="rh" style="top:360.5px">189</div>
<div class="rh" style="top:369.5px">190</div>
<div class="rh" style="top:378.5px">191</div>
<div class="rh" style="top:387.5px">192</div>
<div class="rh" style="top:396.5px">193</div>
<div class="rh" style="top:405.5px">194</div>
<div class="rh" style="top:414.5px">195</div>
<div class="rh" style="top:423.5px">196</div>
<div class="rh" style="top:432.5px">197</div>
<div class="rh" style="top:441.5px">198</div>
<div class="rh" style="top:450.5px">199</div>
<div class="rh" style="top:459.5px">200</div>
<div class="rh" style="top:468.5px">201</div>
<div class="rh" style="top:477.5px">202</div>
<div class="rh" style="top:486.5px">203</div>
<div class="rh" style="top:495.5px">204</div>
<div class="rh" style="top:504.5px">205</div>
<div class="rh" style="top:513.5px">206</div>
<div class="rh" style="top:522.5px">207</div>
<div class="rh" style="top:531.5px">208</div>
<div class="rh" style="top:540.5px">209</div>
<div class="rh" style="top:549.5px">210</div>
<div class="rh" style="top:558.5px">211</div>
<div class="rh" style="top:567.5px">212</div>
<div class="rh" style="top:576.5px">213</div>
<div class="rh" style="top:585.5px">214</div>
<div class="rh" style="top:594.5px">215</div>
<div class="rh" style="top:603.5px">216</div>
<div class="rh" style="top:612.5px">217</div>
<div class="rh" style="top:621.5px">218</div>
<div class="rh" style="top:630.5px">219</div>
<div class="rh" style="top:639.5px">220</div>
<div class="rh" style="top:648.5px">221</div>
<div class="rh" style="top:657.5px">222</div>
<div class="rh" style="top:666.5px">223</div>
<div class="rh" style="top:675.5px">224</div>
<div class="rh" style="top:684.5px">225</div>
<div class="rh" style="top:693.5px">226</div>
<div class="rh" style="top:702.5px">227</div>
<div class="rh" style="top:711.5px">228</div>
<div class="rh" style="top:720.5px">229</div>
<div class="rh" style="top:729.5px">230</div>
<div class="rh" style="top:738.5px">231</div>
<div class="rh" style="top:747.5px">232</div>
<div class="rh" style="top:756.5px">233</div>
<div class="rh" style="top:765.5px">234</div>
<div class="rh" style="top:774.5px">235</div>
<div class="rh" style="top:783.5px">236</div>
<div class="rh" style="top:792.5px">237</div>
<div class="rh" style="top:801.5px">238</div>
</div>
<!-- ===== sheet drawing ===== -->
<div class="abs" style="left:21px;top:179px;width:1240px;height:807px;overflow:hidden;background:#fff">
<svg style="left:-21px;top:-179px" width="1261" height="986" viewBox="0 0 1261 986" font-family="Liberation Sans,sans-serif">
<defs><linearGradient id="gv" x1="0" y1="0" x2="0" y2="1"><stop offset="0" stop-color="#fbfbfb"/><stop offset="1" stop-color="#bdbdbd"/></linearGradient><linearGradient id="gh" x1="0" y1="0" x2="1" y2="0"><stop offset="0" stop-color="#ededed"/><stop offset="1" stop-color="#bcbcbc"/></linearGradient><linearGradient id="glens" gradientUnits="userSpaceOnUse" x1="552" y1="586" x2="224" y2="760"><stop offset="0" stop-color="#efefef"/><stop offset=".5" stop-color="#d9d9d9"/><stop offset="1" stop-color="#bcbcbc"/></linearGradient><linearGradient id="ggr" gradientUnits="userSpaceOnUse" x1="700" y1="452" x2="757" y2="533"><stop offset="0" stop-color="#ececec"/><stop offset="1" stop-color="#b5b5b5"/></linearGradient></defs>
<path d="M21 284.500A912 912 0 0 1 21 700.500Z" fill="#4f81bd"/>
<path d="M138.5 406.2C138.5 392.8 140.7 381.9 143.5 381.9L452.5 381.9C455 381.9 457 370.9 457 357.4C457 370.9 459 381.9 461.5 381.9L770.5 381.9C773.3 381.9 775.5 392.8 775.5 406.2" fill="none" stroke="#e46c0a" stroke-width="2" stroke-opacity="0.58" stroke-linejoin="round"/>
<rect x="108.500" y="289.500" width="121" height="58" fill="#8b8685" stroke="#3c0000" stroke-width="1.2"/>
<rect x="140.500" y="347.500" width="61" height="59" fill="#211818" fill-opacity=".72" stroke="#3c0000" stroke-width="1.2"/>
<rect x="45.500" y="429.500" width="91.500" height="125" fill="#302829" stroke="#3a0808" stroke-width=".8"/>
<rect x="44.500" y="440" width="93.500" height="103" fill="#150d0d" stroke="#3a0606" stroke-width=".8"/>
<path d="M45 481.5L70 485" stroke="#000" stroke-width="0.8" fill="none"/>
<path d="M45 507L70 503.5" stroke="#000" stroke-width="0.8" fill="none"/>
<path d="M171.4 313L171.4 501.5" stroke="#000" stroke-width="1" fill="none"/>
<path d="M171.400 334.500L159.700 430M171.400 334.500L183.300 430M159.700 443L169 500.500M183.300 443L175.300 508" stroke="#000" stroke-width="1" fill="none"/>
<path d="M159.500 433.500Q159.500 431 162 430.500Q171.500 428 181 430.500Q183.500 431 183.500 433.500V439.500Q183.500 442 181 442.500Q171.500 445 162 442.500Q159.500 442 159.500 439.500Z" fill="url(#gh)" stroke="#000" stroke-width="1"/>
<path d="M171.4 428L171.4 446" stroke="#000" stroke-width="1" fill="none"/>
<polygon points="168,501 189.700,526.400 188.600,542 166.300,515" fill="#4f81bd"/>
<path d="M211 494.300L138 487.300M211 494.300L138 501.400M211 494.300L175.300 508M211 494.300L174 504.500M211 494.300L171.400 500.500M211 494.300L138 493.300M211 494.300L138 495.500" stroke="#000" stroke-width=".9" fill="none"/>
<polygon points="205.400,475.700 208,475 217.200,511.200 214.600,511.900" fill="#d9d9d9" stroke="#000" stroke-width=".8"/>
<path d="M824.8 441L21 869.5" stroke="#000" stroke-width="1.1" fill="none"/>
<path d="M699.8 458.6L515 544.6" stroke="#c0504d" stroke-width="1" fill="none"/>
<path d="M699.8 458.6L519.8 554.9" stroke="#9bbb59" stroke-width="1" fill="none"/>
<path d="M699.8 458.6L525.3 564.8" stroke="#4bacc6" stroke-width="1" fill="none"/>
<path d="M721 496L533 580.2" stroke="#c0504d" stroke-width="1" fill="none"/>
<path d="M721 496L540 591.8" stroke="#9bbb59" stroke-width="1" fill="none"/>
<path d="M721 496L546 604" stroke="#4bacc6" stroke-width="1" fill="none"/>
<path d="M740.5 533.6L554.3 617.8" stroke="#c0504d" stroke-width="1" fill="none"/>
<path d="M740.5 533.6L559.7 629.4" stroke="#9bbb59" stroke-width="1" fill="none"/>
<path d="M740.5 533.6L565 640.3" stroke="#4bacc6" stroke-width="1" fill="none"/>
<path d="M721 496L540 591.8" stroke="#000" stroke-width="1.3" fill="none"/>
<path d="M721 495.3L540 591" stroke="#9bbb59" stroke-width="0.9" fill="none"/>
<path d="M501.500 455.500H521Q524 455.500 524.300 458.500Q529 494 524.300 528.500Q524 531.500 521 531.500H501.500Q498.500 531.500 498.200 528.500Q493.500 494 498.200 458.500Q498.500 455.500 501.500 455.500Z" fill="url(#gv)" stroke="#000" stroke-width="1" stroke-linejoin="round"/>
<path d="M211 494.300L511 467.200L699.800 458.600M211 494.300L511 521.200L740.500 533.600" stroke="#000" stroke-width="1" fill="none"/>
<polygon points="187.700,664.200 102.700,709.100 199.100,890 283.600,844.800" fill="#aeabaa" stroke="#3c0000" stroke-width=".9"/>
<polygon points="180.800,667.800 109.500,705.700 204.700,886.300 276,848.200" fill="#b57272" stroke="#3c0000" stroke-width=".9"/>
<path d="M21 869.5L204.7 771.3" stroke="#000" stroke-width="0.9" fill="none"/>
<path d="M133.9 420.6C120.1 420.6 108.9 422.8 108.9 425.6L108.9 613C108.9 615.5 98.2 617.5 84.9 617.5C98.2 617.5 108.9 619.6 108.9 622L108.9 809.5C108.9 812.3 120.1 814.5 133.9 814.5" fill="none" stroke="#e46c0a" stroke-width="2" stroke-opacity="0.58" stroke-linejoin="round"/>
<circle cx="93" cy="495" r="30" fill="url(#gv)"/>
<path d="M198.600 762.800L228 742.800M198.600 762.800L230 746.500M198.600 762.800L232.800 750.600" stroke="#c0504d" stroke-width=".7" fill="none"/>
<path d="M202.800 770.800L233 751.500M202.800 770.800L235.300 755.500M202.800 770.800L237 759" stroke="#9bbb59" stroke-width=".9" fill="none"/>
<path d="M206 781.300L236 757.500M206 781.300L237.700 761M206 781.300L239.400 766" stroke="#4bacc6" stroke-width=".7" fill="none"/>
<polygon points="512.200,541.200 567.700,645.100 263.800,806.200 208.900,702.500" fill="url(#glens)" stroke="#000" stroke-width="1.100"/>
<polygon points="699,453.600 714,446.600 758.400,529.400 743.300,537.500" fill="url(#ggr)" stroke="#000" stroke-width="1.100"/>
<path d="M21 494.5L908 494.5" stroke="#000" stroke-width="1.1" fill="none"/>
<path d="M208.5 424.8C208.5 421.6 209.2 419 210 419L358 419C358.8 419 359.5 416.3 359.5 413C359.5 416.3 360.2 419 361 419L509 419C509.8 419 510.5 421.6 510.5 424.8" fill="none" stroke="#e46c0a" stroke-width="1.9" stroke-opacity="0.58" stroke-linejoin="round"/>
<path d="M510.5 424.8C510.5 421.3 511.2 418.4 512 418.4L613.5 418.4C614.3 418.4 615 415.7 615 412.4C615 415.7 615.7 418.4 616.5 418.4L718 418.4C718.8 418.4 719.5 421.3 719.5 424.8" fill="none" stroke="#e46c0a" stroke-width="1.2" stroke-linejoin="round"/>
<path d="M540.5 494.6C543.5 494.6 546 495.3 546 496.1L546 541.1C546 541.9 548.5 542.6 551.5 542.6C548.5 542.6 546 543.3 546 544.1L546 589.1C546 589.9 543.5 590.6 540.5 590.6" fill="none" stroke="#e46c0a" stroke-width="2" stroke-opacity="0.58" stroke-linejoin="round"/>
<path d="M719.9 452.1C723 450.4 725.9 449.6 726.3 450.3L731.7 460.1C732.1 460.9 734.2 460.5 736.3 459.3C734.2 460.5 732.7 462.1 733.1 462.8L764.8 521C765.2 521.7 762.9 523.7 759.8 525.4" fill="none" stroke="#e46c0a" stroke-width="1.1" stroke-linejoin="round"/>
<path d="M290.7 850.7C292.1 853.4 293.9 855.3 294.6 854.9L443.4 775.4C444.1 775 445.9 776.8 447.3 779.5C445.9 776.8 445.3 774.3 446 773.9L594.8 694.4C595.5 694 594.9 691.5 593.5 688.8" fill="none" stroke="#e46c0a" stroke-width="1.1" stroke-linejoin="round"/>
<path d="M593.6 688.8C595 691.5 596.7 693.4 597.4 693L688 645.7C688.8 645.3 690.3 646.8 691.4 649C690.3 646.8 690 644.7 690.7 644.3L775.9 599.9C776.6 599.5 776.1 597 774.7 594.3" fill="none" stroke="#e46c0a" stroke-width="1.1" stroke-linejoin="round"/>
<path d="M298.3 869.5C304.8 881.7 311.7 890.8 313.6 889.7L553 761.9C555 760.9 561.8 769.9 568.3 782.1C561.8 769.9 558.1 759.2 560.1 758.2L799.5 630.4C801.4 629.3 797.7 618.6 791.2 606.4" fill="none" stroke="#e46c0a" stroke-width="1.1" stroke-linejoin="round"/>
<text x="22.6" y="276.2" textLength="47.7" lengthAdjust="spacingAndGlyphs" font-size="7" font-weight="bold" fill="#000">Telescope Wall</text>
<text x="22.6" y="285.2" textLength="156.4" lengthAdjust="spacingAndGlyphs" font-size="7" font-weight="bold" fill="#000">Curvature of telescope upper cage; 38&quot; diameter</text>
<text x="246.9" y="302.7" textLength="129.1" lengthAdjust="spacingAndGlyphs" font-size="7" font-weight="bold" fill="#000">Orion Starshoot Autoguider; 2.53&quot; round</text>
<text x="246.9" y="312.1" textLength="142.9" lengthAdjust="spacingAndGlyphs" font-size="7" font-weight="bold" fill="#000">1.3mp 1280x1024, 5.2umx5.2um, 4.4'x5.6' fov</text>
<text x="450.4" y="338.7" textLength="23" lengthAdjust="spacingAndGlyphs" font-size="7" font-weight="bold" fill="#000">13.25 &quot;</text>
<text x="450" y="348" textLength="32" lengthAdjust="spacingAndGlyphs" font-size="7" font-weight="bold" fill="#000">406.4 mm</text>
<text x="362" y="401.5" textLength="15.5" lengthAdjust="spacingAndGlyphs" font-size="7" font-weight="bold" fill="#000">6.3 &quot;</text>
<text x="350.4" y="410.9" textLength="35.6" lengthAdjust="spacingAndGlyphs" font-size="7" font-weight="bold" fill="#000">160.02 mm</text>
<text x="59.8" y="420.3" textLength="55.4" lengthAdjust="spacingAndGlyphs" font-size="7" font-weight="bold" fill="#000">focuser racked in</text>
<text x="310.5" y="474.2" textLength="29.3" lengthAdjust="spacingAndGlyphs" font-size="7" font-weight="bold" fill="#000">f4.5 cone</text>
<text x="246.5" y="519.1" textLength="10.1" lengthAdjust="spacingAndGlyphs" font-size="7" font-weight="bold" fill="#000">slit</text>
<text x="151" y="563.8" textLength="53" lengthAdjust="spacingAndGlyphs" font-size="7" font-weight="bold" fill="#000">guide fold mirror</text>
<text x="69.5" y="617.7" textLength="19.5" lengthAdjust="spacingAndGlyphs" font-size="7" font-weight="bold" fill="#000">8.25 &quot;</text>
<text x="61.7" y="627.1" textLength="36.7" lengthAdjust="spacingAndGlyphs" font-size="7" font-weight="bold" fill="#000">209.55 mm</text>
<text x="246.9" y="627.1" textLength="36.7" lengthAdjust="spacingAndGlyphs" font-size="7" font-weight="bold" fill="#000">200mm f3.5</text>
<text x="227" y="636.1" textLength="80.4" lengthAdjust="spacingAndGlyphs" font-size="7" font-weight="bold" fill="#000">57.14 mm clear aperture</text>
<text x="118.8" y="681.1" textLength="27.2" lengthAdjust="spacingAndGlyphs" font-size="7" font-weight="bold" fill="#000">ST-8300</text>
<text x="613.7" y="401.8" textLength="19.9" lengthAdjust="spacingAndGlyphs" font-size="7" font-weight="bold" fill="#000">4.35 &quot;</text>
<text x="607.4" y="411.2" textLength="34.8" lengthAdjust="spacingAndGlyphs" font-size="7" font-weight="bold" fill="#000">110.49 mm</text>
<text x="598.8" y="438.1" textLength="34.8" lengthAdjust="spacingAndGlyphs" font-size="7" font-weight="bold" fill="#000">160mm f4.1</text>
<text x="598.8" y="447.1" textLength="50" lengthAdjust="spacingAndGlyphs" font-size="7" font-weight="bold" fill="#000">40mm diameter</text>
<text x="598.8" y="456.1" textLength="67.6" lengthAdjust="spacingAndGlyphs" font-size="7" font-weight="bold" fill="#000">39mm clear aperture</text>
<text x="742.3" y="447" textLength="18.9" lengthAdjust="spacingAndGlyphs" font-size="7" font-weight="bold" fill="#000">1.78 &quot;</text>
<text x="741.6" y="456.3" textLength="28.6" lengthAdjust="spacingAndGlyphs" font-size="7" font-weight="bold" fill="#000">45.3 mm</text>
<text x="791" y="483.1" textLength="33.7" lengthAdjust="spacingAndGlyphs" font-size="7" font-weight="bold" fill="#000">28 degrees</text>
<text x="758.7" y="546.5" textLength="69.3" lengthAdjust="spacingAndGlyphs" font-size="7" font-weight="bold" fill="#000">50mm x50mm grating</text>
<text x="559.7" y="545.7" textLength="9.6" lengthAdjust="spacingAndGlyphs" font-size="7" font-weight="bold" fill="#000">2 &quot;</text>
<text x="549.7" y="555.5" textLength="28.5" lengthAdjust="spacingAndGlyphs" font-size="7" font-weight="bold" fill="#000">50.8 mm</text>
<text x="677.6" y="662.9" textLength="20" lengthAdjust="spacingAndGlyphs" font-size="7" font-weight="bold" fill="#000">4.25 &quot;</text>
<text x="670.6" y="672.3" textLength="35.2" lengthAdjust="spacingAndGlyphs" font-size="7" font-weight="bold" fill="#000">107.95 mm</text>
<text x="457.8" y="788.9" textLength="15.6" lengthAdjust="spacingAndGlyphs" font-size="7" font-weight="bold" fill="#000">7.2 &quot;</text>
<text x="446.9" y="798.3" textLength="35.6" lengthAdjust="spacingAndGlyphs" font-size="7" font-weight="bold" fill="#000">182.88 mm</text>
<text x="588.6" y="788.7" textLength="12.4" lengthAdjust="spacingAndGlyphs" font-size="7" font-weight="bold" fill="#000">12 &quot;</text>
<text x="577.6" y="798.1" textLength="32.6" lengthAdjust="spacingAndGlyphs" font-size="7" font-weight="bold" fill="#000">304.8 mm</text>
<!-- upper right schematic (vertically mirrored picture) -->
<g stroke="#111" fill="none" stroke-width="1">
<path d="M971.600 218.800V262" stroke-width=".8"/>
<path d="M969.600 258l2 4.800 2-4.800z" fill="#111" stroke-width=".5"/>
<path d="M906.600 241.200V259" stroke-width="1.200"/>
<path d="M909 250H985" stroke-width="1.300"/>
<path d="M907 250l6-2.300v4.600z" fill="#111"/>
<ellipse cx="941" cy="250" rx="2.200" ry="8.500" stroke-width=".8" stroke="#555"/>
<path d="M972 262L984.500 251" stroke-width="1.300"/>
<path d="M985.800 249.800l-5.600 1.500 3.200 3.600z" fill="#111"/>
<path d="M989.800 245.600L985.200 258.100" stroke-width="1"/>
<path d="M962.500 263.600L981 268" stroke-width=".8"/>
<path d="M971.600 268.300V314.400" stroke-width=".9"/>
<path d="M971.600 268.300Q976.200 268 976.200 273V288.500Q976.200 292.500 981 292.500Q976.200 292.500 976.200 296.500V312.800" stroke-width=".9"/>
<path d="M962.200 308.100L981 325.600" stroke-width="3.200"/>
<path d="M971.600 317.300H1037.500" stroke-width=".9"/>
<path d="M972.500 316Q974 312.500 979 312.500H1002.500Q1006.700 312.500 1006.700 307.500Q1006.700 312.500 1011 312.500H1034Q1040 312.500 1040.500 318" stroke-width=".9"/>
<path d="M1032 290.600H1050" stroke-width="3"/>
<ellipse cx="1041.400" cy="317.500" rx="4.600" ry="26" stroke-width=".8" stroke="#444"/>
<path d="M1032 343.800H1050" stroke-width="3"/>
<path d="M1050.500 344.800L1033 352.600" stroke-width="3"/>
<path d="M1050.300 317.500H1231" stroke-width=".9"/>
<path d="M1050.300 318.500Q1051 311.300 1060 311.300H1134Q1140.500 311.300 1140.500 304.800Q1140.500 311.300 1147 311.300H1221Q1229.500 311.300 1231 317" stroke-width=".9"/>
<path d="M1259.800 290.100L1208 339.300" stroke-width="3.200"/>
<path d="M1231 316.900L935 419.900" stroke-width=".85"/>
<path d="M932.800 420.700l6.600-.200-1.600-4.400z" fill="#111"/>
<path d="M929.400 416.600L933.800 424.700" stroke-width=".8"/>
<path d="M1177.200 317.500A54 54 0 0 0 1181.500 334.200" stroke-width=".8"/>
<path d="M1050.300 318V378.400" stroke-width=".8" stroke-dasharray="2 1.500"/>
<path d="M1050.800 318Q1054.800 318 1054.800 323V344Q1054.800 348 1059.500 348Q1054.800 348 1054.800 352V378.400" stroke-width=".9"/>
<path d="M1040.500 344.200Q1041 383 1061 409.600Q1062 372 1040.500 344.200Z" stroke-width=".8" stroke="#333"/>
<path d="M1055.200 414.100L1068.400 409" stroke-width="3"/>
</g>
<text transform="translate(973.4 218.3) scale(1 -1)" textLength="64.9" lengthAdjust="spacingAndGlyphs" font-size="8.7" font-weight="bold" fill="#111">Telescope input</text>
<text transform="translate(925 223.8) scale(1 -1)" textLength="16.4" lengthAdjust="spacingAndGlyphs" font-size="8.7" font-weight="bold" fill="#111">lens</text>
<text transform="translate(925 233.9) scale(1 -1)" textLength="31.2" lengthAdjust="spacingAndGlyphs" font-size="8.7" font-weight="bold" fill="#111">Imaging</text>
<text transform="translate(993.3 244.9) scale(1 -1)" textLength="26.7" lengthAdjust="spacingAndGlyphs" font-size="8.7" font-weight="bold" fill="#111">Mirror</text>
<text transform="translate(983.6 264.7) scale(1 -1)" textLength="13.3" lengthAdjust="spacingAndGlyphs" font-size="8.7" font-weight="bold" fill="#111">Slit</text>
<text transform="translate(907 272.9) scale(1 -1)" textLength="50" lengthAdjust="spacingAndGlyphs" font-size="8.7" font-weight="bold" fill="#111">Guiding CCD</text>
<text transform="translate(982.3 289.7) scale(1 -1)" textLength="27.7" lengthAdjust="spacingAndGlyphs" font-size="8.7" font-weight="bold" fill="#111">80 mm</text>
<text transform="translate(999.2 296.9) scale(1 -1)" textLength="27.4" lengthAdjust="spacingAndGlyphs" font-size="8.7" font-weight="bold" fill="#111">80 mm</text>
<text transform="translate(966.4 330) scale(1 -1)" textLength="26.9" lengthAdjust="spacingAndGlyphs" font-size="8.7" font-weight="bold" fill="#111">Mirror</text>
<text transform="translate(1031.2 275.3) scale(1 -1)" textLength="42.2" lengthAdjust="spacingAndGlyphs" font-size="8.7" font-weight="bold" fill="#111">Collimator</text>
<text transform="translate(1127.4 292.9) scale(1 -1)" textLength="32.2" lengthAdjust="spacingAndGlyphs" font-size="8.7" font-weight="bold" fill="#111">132 mm</text>
<text transform="translate(1201.6 347.4) scale(1 -1)" textLength="29.7" lengthAdjust="spacingAndGlyphs" font-size="8.7" font-weight="bold" fill="#111">Grating</text>
<text transform="translate(1180 321.2) scale(1 -1)" textLength="13.8" lengthAdjust="spacingAndGlyphs" font-size="8" font-weight="bold" fill="#111">28°</text>
<text transform="translate(1063 344.9) scale(1 -1)" textLength="27" lengthAdjust="spacingAndGlyphs" font-size="8.7" font-weight="bold" fill="#111">70 mm</text>
<text transform="translate(1072.3 393.9) scale(1 -1)" textLength="16.4" lengthAdjust="spacingAndGlyphs" font-size="8.7" font-weight="bold" fill="#111">lens</text>
<text transform="translate(1072.3 405.2) scale(1 -1)" textLength="30.7" lengthAdjust="spacingAndGlyphs" font-size="8.7" font-weight="bold" fill="#111">Camera</text>
<text x="923.800" y="408.700" textLength="16.200" lengthAdjust="spacingAndGlyphs" font-size="8.700" font-weight="bold" fill="#111">CCD</text>
<!-- lower right optical layout -->
<text x="980" y="669.4" textLength="100.3" lengthAdjust="spacingAndGlyphs" font-size="10" font-weight="bold" fill="#ff6a20">Collimateur ( f1 , Fc )</text>
<text x="903.2" y="693" textLength="37.8" lengthAdjust="spacingAndGlyphs" font-size="7.8" font-weight="bold" fill="#f08c1e">Plan focal</text>
<text x="903.2" y="701" textLength="37.4" lengthAdjust="spacingAndGlyphs" font-size="7.8" font-weight="bold" fill="#f08c1e">télescope</text>
<text x="1193.6" y="684.9" textLength="34.7" lengthAdjust="spacingAndGlyphs" font-size="10" font-weight="bold" fill="#ff6a20">Réseau</text>
<text x="1112" y="683.1" textLength="10" lengthAdjust="spacingAndGlyphs" font-size="10" font-weight="bold" fill="#118a11">d1</text>
<text x="1130.4" y="738.2" textLength="11.3" lengthAdjust="spacingAndGlyphs" font-size="10" font-weight="bold" fill="#118a11">d2</text>
<text x="1247.8" y="705.7" textLength="5.7" lengthAdjust="spacingAndGlyphs" font-size="9.5" font-weight="bold" fill="#118a11">L</text>
<text x="1228.3" y="782.1" textLength="6.5" lengthAdjust="spacingAndGlyphs" font-size="9.5" font-weight="bold" fill="#118a11">X</text>
<text x="1044" y="841.3" textLength="21" lengthAdjust="spacingAndGlyphs" font-size="10" font-weight="bold" fill="#ff6a20">CCD</text>
<text x="1116" y="835.2" textLength="82.6" lengthAdjust="spacingAndGlyphs" font-size="10" font-weight="bold" fill="#ff6a20">Objectif ( f2 , Fo )</text>
<text x="1230" y="703" font-size="5" fill="#58d058">β</text><text x="1242" y="717" font-size="5" fill="#58d058">α</text>
<g stroke="#ff6b6b" stroke-width=".8" fill="none">
<path d="M919.600 713.600H1232"/>
<path d="M919.600 713.600L1008.400 707L1075.500 699.500L1095 698.400H1222.700"/>
<path d="M919.600 713.600L1008.400 720.200L1075.500 727.300L1095 727.700H1241.300"/>
</g>
<path d="M919.600 706.700V720.100" stroke="#444" stroke-width="1"/>
<path d="M920 713.600h5" stroke="#e00" stroke-width="1.200"/>
<g stroke="#555" stroke-width=".8" fill="none">
<path d="M967.500 690H983.500Q970 713 983.500 736.300H967.500Q959.500 713 967.500 690Z"/>
<path d="M970 690.500Q977 713 970 735.800"/>
<path d="M1000 692.200H1013.800Q996 713 1013.800 734.200H1000Q993 713 1000 692.200Z"/>
<path d="M1010.500 692.800Q991 713 1010.500 733.600"/>
<path d="M1026.800 688.200H1028.600Q1034.500 713 1028.600 738.500H1026.800Q1024 713 1026.800 688.200Z"/>
<path d="M1051.200 681.300H1058Q1091 713 1058 744.500H1051.200Q1068 713 1051.200 681.300Z"/>
<path d="M1055.500 682Q1078 713 1055.500 744"/>
<path d="M1077.700 683.500V742.800" stroke-width="1.200"/>
<path d="M1081.200 679.200H1094.500Q1111 713 1094.500 747.600H1081.200Q1084.500 713 1081.200 679.200Z"/>
<path d="M1094.500 679.200Q1083.500 713 1094.500 747.600M1092.800 684Q1086 713 1092.800 743"/>
</g>
<g stroke="#118a11" stroke-width=".8" fill="none">
<path d="M1109.800 671V696M1107.800 691.500L1109.800 696.200L1111.800 691.500"/>
<path d="M1110.500 743.500V729.800M1108.800 734L1110.500 729.600L1112.200 734"/>
<path d="M1137.400 724.600L1150.800 741.600M1146.300 740.300L1150.800 741.600L1150.300 737"/>
<path d="M1222.500 697L1240 689.800M1242.200 729.600L1256 720.500"/>
<path d="M1238.500 690.600L1254.300 721.200M1238.300 695.300L1238.500 690.600L1242.500 693M1250 718.700L1254.300 721.200L1254.500 716.300"/>
<path d="M1244 734.200L1257 756.500M1180.400 784.300L1195 805.600"/>
<path d="M1256 754.600L1188.400 794.500M1250.500 754.300L1256 754.600L1253.200 759.300M1191.200 789.700L1188.400 794.500L1194 794.700"/>
<path d="M1182.500 780.600L1187.500 788M1182.500 784.500L1182.500 780.600L1185.800 782"/>
</g>
<path d="M1233 713.400l8-4.500M1233 713.400h9M1237.500 707.500l3 3.500M1241 709l-.500 4" stroke="#58d058" stroke-width=".6" fill="none"/>
<path d="M1221.700 696.700L1242.400 729.800" stroke="#444" stroke-width=".9"/>
<path d="M1222.7 698.5L1147.8 746.2L1133.8 764.3L1127.8 769.7L1105.7 776.6L1098.8 782.5L1065.4 828.4" stroke="#ff6b6b" stroke-width=".8" fill="none"/>
<path d="M1222.7 698.5L1150.9 750.4L1135.9 767.3L1129.9 772.6L1108 779.8L1101.3 785.9L1068 832" stroke="#44dd44" stroke-width=".8" fill="none"/>
<path d="M1222.7 698.5L1153.9 754.6L1138.1 770.3L1131.9 775.4L1110.2 782.9L1103.7 789.3L1070.6 835.6" stroke="#4a4aff" stroke-width=".8" fill="none"/>
<path d="M1231.9 713.4L1158.1 760.4L1141.1 774.5L1134.8 779.3L1116.7 791.9L1109.3 797L1065.4 828.4" stroke="#ff6b6b" stroke-width=".8" fill="none"/>
<path d="M1231.9 713.4L1161.2 764.6L1143.3 777.5L1136.8 782.2L1119 795.1L1111.7 800.4L1068 832" stroke="#44dd44" stroke-width=".8" fill="none"/>
<path d="M1231.9 713.4L1164.2 768.8L1145.5 780.5L1138.9 785.1L1121.3 798.2L1114.2 803.7L1070.6 835.6" stroke="#4a4aff" stroke-width=".8" fill="none"/>
<path d="M1241.2 727.8L1168.1 774.2L1148.4 784.4L1141.6 788.7L1127.6 806.9L1119.5 811.1L1065.4 828.4" stroke="#ff6b6b" stroke-width=".8" fill="none"/>
<path d="M1241.2 727.8L1171.2 778.5L1150.5 787.5L1143.7 791.6L1129.9 810L1122 814.5L1068 832" stroke="#44dd44" stroke-width=".8" fill="none"/>
<path d="M1241.2 727.8L1174.2 782.7L1152.7 790.5L1145.7 794.5L1132.1 813.2L1124.4 817.9L1070.6 835.6" stroke="#4a4aff" stroke-width=".8" fill="none"/>
<g transform="matrix(0.81 -0.586 0.586 0.81 1068 832)" stroke="#555" stroke-width=".8" fill="none">
<path d="M107 -30Q126 0 111.500 30L109.500 30Q123 0 105 -30Z"/>
<path d="M88 -25.500L99 -26Q112 0 104 25.500L92 26Q99 0 88 -25.500Z"/><path d="M94 -25.800Q106 0 98 25.800"/>
<path d="M70 -23L82 -22Q76 0 85 21.500L74 22.500Q66 0 70 -23Z"/><path d="M76 -22.500Q70 0 79.500 22"/>
<path d="M60.500 -24L63 -24Q72 0 67 23.500L64.500 23.500Q69 0 60.500 -24Z"/>
<path d="M49.800 -25.500Q57 0 53.700 26Q47 0 49.800 -25.500Z"/><path d="M56 -24.500Q61 0 59 24"/>
</g>
<path d="M1063.200 827L1072.500 837.200" stroke="#333" stroke-width="1.100"/>
</svg></div>
<!-- ===== vertical scrollbar ===== -->
<div class="abs" style="left:1261px;top:168px;width:19px;height:818px;background:linear-gradient(90deg,#a7c0e4 0,#7f9ecb 4px,#7a99c6 11px,#86a4cf 15px,#b7d1f5 15.500px,#b7d1f5 19px)"></div>
<div class="abs" style="left:1262px;top:168px;width:14px;height:6px;background:#fff;border:1px solid #8aa8cf"></div><div class="abs" style="left:1265px;top:170.500px;width:8px;height:1px;background:#5d7fb5"></div>
<svg class="abs" style="left:1261px;top:168px" width="19" height="818" viewBox="1261 168 19 818"><defs><linearGradient id="vth" x1="0" y1="0" x2="1" y2="0"><stop offset="0" stop-color="#eef2f8"/><stop offset=".45" stop-color="#dbe3ef"/><stop offset=".5" stop-color="#c9d4e4"/><stop offset="1" stop-color="#e3e9f3"/></linearGradient></defs><path d="M1264.500 184h9.500l-4.750-5.500z" fill="#4a5578"/><path d="M1264.800 976h9.400l-4.700 5z" fill="#4a5578"/><rect x="1262.500" y="556.500" width="13" height="217" rx="1.500" fill="url(#vth)" stroke="#6f86ad" stroke-width="1"/><path d="M1265.500 662.500h7M1265.500 664.500h7M1265.500 666.500h7M1265.500 668.500h7" stroke="#6b7f9f" stroke-width="1"/></svg>
<!-- ===== sheet tabs row ===== -->
<div class="abs" style="left:0;top:986px;width:1261px;height:16px;background:linear-gradient(#b1c9ea,#a9c3e8 8px,#9fbbe3 9px,#b4ccec)"></div>
<svg class="abs" style="left:0;top:986px" width="760" height="16" viewBox="0 986 760 16"><defs><linearGradient id="stab" x1="0" y1="0" x2="0" y2="1"><stop offset="0" stop-color="#e7effa"/><stop offset=".5" stop-color="#d3e1f4"/><stop offset=".55" stop-color="#c2d5ef"/><stop offset="1" stop-color="#cfdff4"/></linearGradient></defs>
<g fill="#15428b"><path d="M5 989h1.500v8H5zM12 989v8l-5-4zM26 989v8l-5-4zM34 989v8l5-4zM47 989v8l5-4zM52 989h1.500v8H52z" transform="translate(0 .5)"/></g>
<path d="M58.500 987v14" stroke="#7f9fd0"/><path d="M59.500 987v14" stroke="#e8f0fb"/>
<path d="M60.5 1001.500V989a1.500 1.500 0 0 1 1.500-1.500H129 L118 1001.500z" fill="url(#stab)" stroke="#6f8fc4" stroke-width="1"/>
<path d="M118 1001.500L129 987.500H254L243 1001.500z" fill="url(#stab)" stroke="#6f8fc4" stroke-width="1"/>
<path d="M243 1001.500L254 987.500H289.5a1.500 1.500 0 0 1 1.500 1.500V1001.500z" fill="url(#stab)" stroke="#6f8fc4" stroke-width="1"/>
<path d="M365 1001.500L376 987.500H451L440 1001.500z" fill="url(#stab)" stroke="#6f8fc4" stroke-width="1"/>
<path d="M440 1001.500L451 987.500H506L495 1001.500z" fill="url(#stab)" stroke="#6f8fc4" stroke-width="1"/>
<path d="M495 1001.500L506 987.500H562L551 1001.500z" fill="url(#stab)" stroke="#6f8fc4" stroke-width="1"/>
<path d="M551 1001.500L562 987.500H594L583 1001.500z" fill="url(#stab)" stroke="#6f8fc4" stroke-width="1"/>
<path d="M291.500 1002V989a1.500 1.500 0 0 1 1.500-1.500H376L365 1002z" fill="#ffffff" stroke="#6f8fc4" stroke-width="1"/>
<path d="M0 1001.500h291M366 1001.500h394" stroke="#6f8fc4"/>
<rect x="566.500" y="991.500" width="9" height="7" rx="1" fill="#fff" stroke="#5b6f99" stroke-width=".9"/><path d="M565 989.500l1 1.800 2-.300-1.300 1.500 1 1.800-1.900-.800-1.400 1.400.200-2-1.800-.900 2-.400z" fill="#f3b02a" stroke="#c98710" stroke-width=".4"/>
</svg>
<div class="st" style="left:90px">simspec</div>
<div class="st" style="left:183px">Bowen lim_mag (2)</div>
<div class="st" style="left:268px">Parts</div>
<div class="st" style="left:330px;font-weight:bold;font-size:11.800px;color:#15428b">Layout (3)</div>
<div class="st" style="left:404px">Layout (2)</div>
<div class="st" style="left:470px">Layout</div>
<div class="st" style="left:525px">Sheet2</div>
<!-- ===== horizontal scrollbar ===== -->
<div class="abs" style="left:757px;top:986px;width:504px;height:16px;background:linear-gradient(#a3bce0 0,#7f9ecb 3px,#7a99c6 10px,#86a4cf 16px)"></div>
<svg class="abs" style="left:757px;top:986px" width="523" height="16" viewBox="757 986 523 16"><defs><linearGradient id="hth" x1="0" y1="0" x2="0" y2="1"><stop offset="0" stop-color="#eef2f8"/><stop offset=".45" stop-color="#dbe3ef"/><stop offset=".5" stop-color="#c9d4e4"/><stop offset="1" stop-color="#e3e9f3"/></linearGradient></defs><rect x="758.500" y="987.500" width="4" height="12" fill="#fff" stroke="#6f8fc4" stroke-width=".8"/><path d="M760.500 990.500v6" stroke="#5d7fb5"/><path d="M773.500 989v9.500l-5.500-4.750z" fill="#3f4d70"/><path d="M1245 989v9.500l5.500-4.750z" fill="#3f4d70"/><rect x="1108.500" y="987.500" width="120" height="13" rx="1.500" fill="url(#hth)" stroke="#6f86ad"/><path d="M1165.500 990.500v7M1167.500 990.500v7M1169.500 990.500v7M1171.500 990.500v7" stroke="#6b7f9f"/><rect x="1256.500" y="987.500" width="4" height="12" fill="#fff" stroke="#6f8fc4" stroke-width=".8"/><path d="M1258.500 990.500v6" stroke="#5d7fb5"/></svg>
<div class="abs" style="left:1261px;top:986px;width:15px;height:16px;background:#7b9dd6"></div><div class="abs" style="left:1276px;top:986px;width:4px;height:16px;background:#b7d1f5"></div>
<!-- ===== status bar ===== -->
<div class="abs" style="left:0;top:1001px;width:1280px;height:23px;background:linear-gradient(#dbe8f9 0,#cddff6 6px,#bcd3f1 11px,#b2ccee 17px,#c9dcf5 21px,#e6effb 23px);border-top:1px solid #8aaee0"></div>
<div class="abs" style="left:1034px;top:1002px;width:246px;height:22px;background:linear-gradient(#c0d6f3 0,#a4c1ea 8px,#8caedf 14px,#7fa3d8 20.500px,#e4ecf6 21px)"></div>
<div class="abs" style="left:46px;top:1004px;width:1px;height:18px;background:#8fa9cf"></div><div class="abs" style="left:47px;top:1004px;width:1px;height:18px;background:#eaf2fc"></div>
<div class="abs" style="left:1034px;top:1004px;width:1px;height:18px;background:#6f8fc0"></div><div class="abs" style="left:1035px;top:1004px;width:1px;height:18px;background:#dfeafa"></div>
<div class="t" style="left:7px;top:1007px;font-size:11.300px;color:#15428b">Ready</div>
<svg class="abs" style="left:1036px;top:1003px" width="244" height="21" viewBox="1036 1003 244 21"><defs><radialGradient id="zb" cx=".5" cy=".35" r=".7"><stop offset="0" stop-color="#ffffff"/><stop offset="1" stop-color="#c3d1e6"/></radialGradient></defs><rect x="1041.500" y="1003.500" width="55" height="17" rx="2" fill="#b9cfee" stroke="#8eaad6" stroke-width=".8"/><rect x="1041.500" y="1003.500" width="18" height="17" rx="2" fill="#fbd47f" stroke="#e3a64a" stroke-width=".8"/><rect x="1045.500" y="1006.500" width="11" height="10" fill="#fff" stroke="#444" stroke-width="1"/><path d="M1045.500 1010h11M1045.500 1013h11M1049 1006.500v10M1053 1006.500v10" stroke="#444" stroke-width=".9"/><rect x="1063.500" y="1006.500" width="11" height="11" fill="#d8d8d8" stroke="#555" stroke-width="1"/><rect x="1066.500" y="1008.500" width="5" height="7" fill="#fff" stroke="#555" stroke-width=".7"/><path d="M1067.500 1010.500h3M1067.500 1012.500h3" stroke="#777" stroke-width=".6"/><rect x="1081.500" y="1006.500" width="11" height="11" fill="#c8c8c8" stroke="#555" stroke-width="1"/><path d="M1083 1007.500h3.500v6H1083zM1088 1007.500h3.500v6H1088z" fill="#fff" stroke="#555" stroke-width=".6"/><path d="M1156 1012.500h104" stroke="#eef4fc" stroke-width="1"/><path d="M1156 1011.500h104" stroke="#6f8fc0" stroke-width=".6"/><path d="M1209.500 1008v8" stroke="#eef4fc"/><circle cx="1149" cy="1012" r="7.500" fill="url(#zb)" stroke="#5b7bb0" stroke-width="1"/><path d="M1145 1012h8" stroke="#333" stroke-width="1.800"/><circle cx="1267" cy="1012" r="7.500" fill="url(#zb)" stroke="#5b7bb0" stroke-width="1"/><path d="M1263 1012h8M1267 1008v8" stroke="#333" stroke-width="1.800"/><path d="M1178.500 1005.500h7v7l-3.500 4-3.500-4z" fill="#e9f0fa" stroke="#4f6ea8" stroke-width="1"/><path d="M1182 1008v5" stroke="#5b7bb0" stroke-width="1"/></svg>
<div class="t" style="left:1104px;top:1007px;font-size:11.300px;color:#15428b">50%</div>
</body></html>
